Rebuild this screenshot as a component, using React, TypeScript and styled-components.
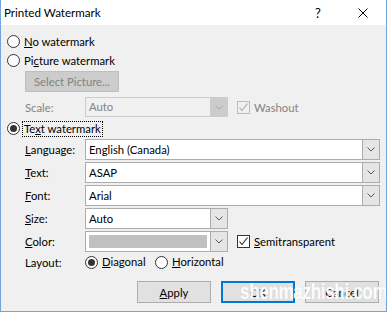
import styled, { createGlobalStyle } from "styled-components";

const Global = createGlobalStyle`
  html, body {
    margin: 0;
    padding: 0;
    background: #ffffff;
  }
  * {
    box-sizing: border-box;
  }
`;

const Window = styled.div`
  position: relative;
  width: 387px;
  height: 312px;
  border: 1px solid #6fa6dc;
  border-top: none;
  background: #f0f0f0;
  font-family: Lato, "Noto Sans", sans-serif;
  font-size: 11.3px;
  color: #000;
  overflow: hidden;
`;

const TitleBar = styled.div`
  height: 25px;
  background: #ffffff;
  display: flex;
  align-items: center;
  padding-left: 3px;
`;

const Title = styled.div`
  flex: 1;
  font-size: 11.6px;
`;

const HelpGlyph = styled.div`
  width: 10px;
  margin-right: 35px;
  font-size: 13px;
  text-align: center;
`;

const CloseBox = styled.div`
  width: 10px;
  height: 10px;
  margin-right: 18px;
  display: flex;
`;

const Body = styled.div`
  padding: 7px 6px 0 6px;
  display: flex;
  flex-direction: column;
`;

const Key = styled.span`
  text-decoration: underline;
  text-underline-offset: 1px;
`;

const OptionRow = styled.div<{ $top?: number }>`
  height: 19px;
  margin-top: ${(p) => p.$top ?? 0}px;
  display: flex;
  align-items: center;
`;

const RadioCircle = styled.span<{ $on?: boolean }>`
  width: 13px;
  height: 13px;
  border-radius: 50%;
  border: 1px solid #333333;
  background: #ffffff;
  display: flex;
  align-items: center;
  justify-content: center;
  flex: none;

  &::after {
    content: "";
    width: 7px;
    height: 7px;
    border-radius: 50%;
    background: #333333;
    display: ${(p) => (p.$on ? "block" : "none")};
  }
`;

const RadioGroup = styled.div<{ $w?: number }>`
  width: ${(p) => (p.$w ? `${p.$w}px` : "auto")};
  display: flex;
  align-items: center;
  gap: 3px;
`;

const FocusLabel = styled.span<{ $focus?: boolean }>`
  padding: 0 1px;
  line-height: 14px;
  outline: ${(p) => (p.$focus ? "1px dotted #000" : "none")};
  outline-offset: 0;
`;

const Indent = styled.div<{ $top?: number }>`
  margin-left: 18px;
  margin-top: ${(p) => p.$top ?? 0}px;
`;

const PushButton = styled.button<{ $default?: boolean; $w?: number; $h?: number }>`
  width: ${(p) => p.$w ?? 75}px;
  height: ${(p) => p.$h ?? 22}px;
  padding: 0;
  font: inherit;
  background: #e1e1e1;
  border: ${(p) => (p.$default ? "2px solid #0078d7" : "1px solid #adadad")};
  color: #000;

  &:disabled {
    background: #cccccc;
    border-color: #bfbfbf;
    color: #838383;
  }
`;

const FieldRow = styled.div<{ $top?: number; $h?: number }>`
  margin-top: ${(p) => p.$top ?? 0}px;
  margin-left: 18px;
  height: ${(p) => p.$h ?? 21}px;
  display: grid;
  grid-template-columns: 60px 1fr;
  align-items: center;
`;

const FieldLabel = styled.span<{ $dim?: boolean }>`
  color: ${(p) => (p.$dim ? "#838383" : "#000")};
`;

const FieldBody = styled.div`
  display: flex;
  align-items: center;
  height: 100%;
`;

const Combo = styled.div<{ $w?: number; $dim?: boolean }>`
  width: ${(p) => (p.$w ? `${p.$w}px` : "100%")};
  height: 100%;
  display: flex;
  flex: none;
  border: 1px solid ${(p) => (p.$dim ? "#cccccc" : "#acacac")};
  background: ${(p) => (p.$dim ? "#f0f0f0" : "#ffffff")};
  color: ${(p) => (p.$dim ? "#838383" : "#000")};
`;

const ComboText = styled.div`
  flex: 1;
  display: flex;
  align-items: center;
  padding-left: 3px;
  padding-bottom: 1px;
`;

const Swatch = styled.div`
  flex: 1;
  margin: 3px;
  background: #c0c0c0;
`;

const DropButton = styled.div<{ $dim?: boolean }>`
  width: 17px;
  flex: none;
  border-left: 1px solid ${(p) => (p.$dim ? "#cccccc" : "#acacac")};
  background: ${(p) => (p.$dim ? "#cccccc" : "#e5e5e5")};
  display: flex;
  align-items: center;
  justify-content: center;
`;

const CheckWrap = styled.div<{ $dim?: boolean }>`
  margin-left: 9px;
  display: flex;
  align-items: center;
  gap: 4px;
  color: ${(p) => (p.$dim ? "#838383" : "#000")};
`;

const CheckBox = styled.span<{ $dim?: boolean }>`
  width: 13px;
  height: 13px;
  border: 1px solid ${(p) => (p.$dim ? "#bcbcbc" : "#333333")};
  background: ${(p) => (p.$dim ? "#f0f0f0" : "#ffffff")};
  display: flex;
  flex: none;
`;

const ButtonBar = styled.div`
  margin-top: 9px;
  display: flex;
  justify-content: flex-end;
  gap: 10px;
  padding-right: 1px;
`;

const Stamp = styled.div`
  position: absolute;
  left: 239px;
  top: 279px;
  font-family: "Liberation Sans", Arial, sans-serif;
  font-weight: bold;
  font-size: 22px;
  letter-spacing: -0.5px;
  color: rgba(255, 255, 255, 0.95);
  transform: scaleX(0.78);
  transform-origin: left top;
  white-space: nowrap;
  text-shadow: 0 0 1px rgba(200, 200, 200, 0.6);
  pointer-events: none;
`;

const Chevron = ({ dim }: { dim?: boolean }) => (
  <svg width="8" height="5" viewBox="0 0 8 5">
    <polyline points="0.5,0.5 4,4 7.5,0.5" fill="none" stroke={dim ? "#a8a8a8" : "#555"} strokeWidth="1" />
  </svg>
);

const Tick = ({ dim }: { dim?: boolean }) => (
  <svg width="11" height="11" viewBox="0 0 11 11">
    <polyline points="1.5,5.5 4,8.5 9.5,1.5" fill="none" stroke={dim ? "#a8a8a8" : "#222"} strokeWidth="1.1" />
  </svg>
);

const Radio = ({
  on,
  focus,
  w,
  children,
}: {
  on?: boolean;
  focus?: boolean;
  w?: number;
  children: React.ReactNode;
}) => (
  <RadioGroup $w={w}>
    <RadioCircle $on={on} />
    <FocusLabel $focus={focus}>{children}</FocusLabel>
  </RadioGroup>
);

export default function App() {
  return (
    <>
      <Global />
      <Window>
        <TitleBar>
          <Title>Printed Watermark</Title>
          <HelpGlyph>?</HelpGlyph>
          <CloseBox>
            <svg width="10" height="10" viewBox="0 0 10 10">
              <path d="M0.5 0.5 L9.5 9.5 M9.5 0.5 L0.5 9.5" stroke="#000" strokeWidth="1" />
            </svg>
          </CloseBox>
        </TitleBar>
        <Body>
          <OptionRow>
            <Radio>
              <Key>N</Key>o watermark
            </Radio>
          </OptionRow>
          <OptionRow>
            <Radio>
              Pi<Key>c</Key>ture watermark
            </Radio>
          </OptionRow>
          <Indent $top={1}>
            <PushButton disabled $w={94} $h={21}>
              Select Picture...
            </PushButton>
          </Indent>
          <FieldRow $top={5} $h={20}>
            <FieldLabel $dim>Scale:</FieldLabel>
            <FieldBody>
              <Combo $w={143} $dim>
                <ComboText>Auto</ComboText>
                <DropButton $dim>
                  <Chevron dim />
                </DropButton>
              </Combo>
              <CheckWrap $dim>
                <CheckBox $dim>
                  <Tick dim />
                </CheckBox>
                Washout
              </CheckWrap>
            </FieldBody>
          </FieldRow>
          <OptionRow $top={2}>
            <Radio on focus>
              Te<Key>x</Key>t watermark
            </Radio>
          </OptionRow>
          <FieldRow $top={1}>
            <FieldLabel>
              <Key>L</Key>anguage:
            </FieldLabel>
            <Combo>
              <ComboText>English (Canada)</ComboText>
              <DropButton>
                <Chevron />
              </DropButton>
            </Combo>
          </FieldRow>
          <FieldRow $top={2}>
            <FieldLabel>
              <Key>T</Key>ext:
            </FieldLabel>
            <Combo>
              <ComboText>ASAP</ComboText>
              <DropButton>
                <Chevron />
              </DropButton>
            </Combo>
          </FieldRow>
          <FieldRow $top={2}>
            <FieldLabel>
              <Key>F</Key>ont:
            </FieldLabel>
            <Combo>
              <ComboText>Arial</ComboText>
              <DropButton>
                <Chevron />
              </DropButton>
            </Combo>
          </FieldRow>
          <FieldRow $top={2}>
            <FieldLabel>
              <Key>S</Key>ize:
            </FieldLabel>
            <FieldBody>
              <Combo $w={143}>
                <ComboText>Auto</ComboText>
                <DropButton>
                  <Chevron />
                </DropButton>
              </Combo>
            </FieldBody>
          </FieldRow>
          <FieldRow $top={2}>
            <FieldLabel>
              <Key>C</Key>olor:
            </FieldLabel>
            <FieldBody>
              <Combo $w={143}>
                <Swatch />
                <DropButton>
                  <Chevron />
                </DropButton>
              </Combo>
              <CheckWrap>
                <CheckBox>
                  <Tick />
                </CheckBox>
                <span>
                  <Key>S</Key>emitransparent
                </span>
              </CheckWrap>
            </FieldBody>
          </FieldRow>
          <FieldRow $h={20}>
            <FieldLabel>Layout:</FieldLabel>
            <FieldBody>
              <Radio on w={70}>
                <Key>D</Key>iagonal
              </Radio>
              <Radio>
                <Key>H</Key>orizontal
              </Radio>
            </FieldBody>
          </FieldRow>
          <ButtonBar>
            <PushButton $w={74}>
              <Key>A</Key>pply
            </PushButton>
            <PushButton $w={74} $default>
              OK
            </PushButton>
            <PushButton $w={74}>Cancel</PushButton>
          </ButtonBar>
        </Body>
        <Stamp>shenmazhishi.com</Stamp>
      </Window>
    </>
  );
}
